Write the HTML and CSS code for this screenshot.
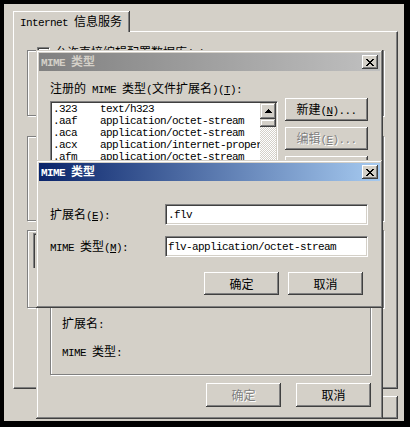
FILE: index.html
```html
<!DOCTYPE html>
<html>
<head>
<meta charset="utf-8">
<title>MIME 类型</title>
<link rel="stylesheet" href="styles.css">
</head>
<body>
<div class="desk">
  <div class="main">
    <div class="tab"><span>Internet <span class="c">信息服务</span></span></div>
    <div class="panel">
      <div class="group g1">
        <div class="legend"><span class="chk"></span><span><span class="c">允许直接编辑配置数据库</span>(<u>N</u>)</span></div>
      </div>
      <div class="group g2"></div>
      <div class="group g3"><div class="stub"></div></div>
    </div>
    <div class="main-btns">
      <div class="btn"><span class="c">确定</span></div>
      <div class="btn"><span class="c">取消</span></div>
      <div class="btn"><span><span class="c">应用</span>(<u>A</u>)</span></div>
    </div>
  </div>

  <div class="win dlg1">
    <div class="title inactive">
      <span class="ttext">MIME <span class="c">类型</span></span>
      <span class="close"><svg width="8" height="7" viewBox="0 0 8 7" shape-rendering="crispEdges"><path d="M0 0h2v1H0zM6 0h2v1H6zM1 1h2v1H1zM5 1h2v1H5zM2 2h4v1H2zM3 3h2v1H3zM2 4h4v1H2zM1 5h2v1H1zM5 5h2v1H5zM0 6h2v1H0zM6 6h2v1H6z" fill="#000"/></svg></span>
    </div>
    <div class="body1">
      <div class="lbl"><span class="c">注册的</span> MIME <span class="c">类型</span>(<span class="c">文件扩展名</span>)(<u>T</u>):</div>
      <div class="row">
        <div class="list">
          <div class="items">
            <div class="item"><span>.323</span><span>text/h323</span></div>
            <div class="item"><span>.aaf</span><span>application/octet-stream</span></div>
            <div class="item"><span>.aca</span><span>application/octet-stream</span></div>
            <div class="item"><span>.acx</span><span>application/internet-property-stream</span></div>
            <div class="item"><span>.afm</span><span>application/octet-stream</span></div>
            <div class="item"><span>.ai</span><span>application/postscript</span></div>
            <div class="item"><span>.aif</span><span>audio/x-aiff</span></div>
            <div class="item"><span>.aifc</span><span>audio/aiff</span></div>
            <div class="item"><span>.aiff</span><span>audio/aiff</span></div>
          </div>
          <div class="sbar">
            <div class="sbtn"><svg width="7" height="4" viewBox="0 0 7 4" shape-rendering="crispEdges"><path d="M3 0h1v1H3zM2 1h3v1H2zM1 2h5v1H1zM0 3h7v1H0z" fill="#000"/></svg></div>
            <div class="thumb"></div>
            <div class="track"></div>
          </div>
        </div>
        <div class="btncol">
          <div class="btn wide"><span><span class="c">新建</span>(<u>N</u>)...</span></div>
          <div class="btn wide dis"><span><span class="c">编辑</span>(<u>E</u>)...</span></div>
          <div class="btn wide"><span><span class="c">删除</span>(<u>R</u>)</span></div>
        </div>
      </div>
      <div class="group g4">
        <div class="gline"><span class="c">扩展名</span>:</div>
        <div class="gline second">MIME <span class="c">类型</span>:</div>
      </div>
      <div class="btnrow1">
        <div class="btn dis"><span class="c">确定</span></div>
        <div class="btn"><span class="c">取消</span></div>
      </div>
    </div>
  </div>

  <div class="win dlg2">
    <div class="title active">
      <span class="ttext">MIME <span class="c">类型</span></span>
      <span class="close"><svg width="8" height="7" viewBox="0 0 8 7" shape-rendering="crispEdges"><path d="M0 0h2v1H0zM6 0h2v1H6zM1 1h2v1H1zM5 1h2v1H5zM2 2h4v1H2zM3 3h2v1H3zM2 4h4v1H2zM1 5h2v1H1zM5 5h2v1H5zM0 6h2v1H0zM6 6h2v1H6z" fill="#000"/></svg></span>
    </div>
    <div class="body2">
      <div class="frow first">
        <div class="flbl"><span class="c">扩展名</span>(<u>E</u>):</div>
        <div class="field">.flv</div>
      </div>
      <div class="frow">
        <div class="flbl">MIME <span class="c">类型</span>(<u>M</u>):</div>
        <div class="field">flv-application/octet-stream</div>
      </div>
      <div class="btnrow2">
        <div class="btn"><span class="c">确定</span></div>
        <div class="btn"><span class="c">取消</span></div>
      </div>
    </div>
  </div>
</div>
</body>
</html>
```

FILE: styles.css
```css
* { box-sizing: border-box; margin: 0; padding: 0; }
body {
  margin: 0;
  background: #000;
  font-family: "Liberation Mono", "Noto Sans CJK SC", monospace;
  font-size: 11px;
  letter-spacing: -0.6px;
  line-height: 14px;
  color: #000;
}
.c {
  font-family: "Noto Sans CJK SC", sans-serif;
  font-size: 12px;
  letter-spacing: 0;
}
u { text-decoration: underline; text-underline-offset: 1px; }

.desk {
  position: relative;
  width: 410px;
  height: 427px;
  padding: 4px;
  background: #000;
  overflow: hidden;
}
.main {
  width: 400px;
  height: 417px;
  background: #d4d0c8;
  padding: 7px 0 0 9px;
}
.tab {
  position: relative;
  z-index: 1;
  width: 116px;
  height: 21px;
  margin-bottom: -1px;
  background: #d4d0c8;
  border-top: 1px solid #fff;
  border-left: 1px solid #fff;
  box-shadow: inset -1px 0 #808080, 1px 0 #404040;
  display: flex;
  align-items: center;
  padding-left: 6px;
  white-space: nowrap;
}
.panel {
  width: 385px;
  height: 358px;
  border-top: 1px solid #fff;
  border-left: 1px solid #fff;
  border-right: 1px solid #404040;
  border-bottom: 1px solid #404040;
  box-shadow: inset -1px -1px #808080;
  padding: 18px 0 0 13px;
}
.group {
  width: 357px;
  border: 1px solid #808080;
  box-shadow: inset 1px 1px #fff, 1px 1px #fff;
}
.g1 { height: 66px; }
.g2 { height: 85px; margin-top: 20px; }
.g3 { height: 78px; margin-top: 9px; padding: 2px 0 0 5px; }
.legend {
  display: flex;
  align-items: center;
  gap: 5px;
  width: max-content;
  margin: -6px 0 0 9px;
  padding-right: 2px;
  background: #d4d0c8;
  white-space: nowrap;
}
.chk {
  width: 13px;
  height: 13px;
  background: #fff;
  border-top: 1px solid #808080;
  border-left: 1px solid #808080;
  border-bottom: 1px solid #fff;
  border-right: 1px solid #fff;
  box-shadow: inset 1px 1px #404040, inset -1px -1px #d4d0c8;
}
.stub {
  width: 120px;
  height: 35px;
  border-top: 1px solid #808080;
  border-left: 1px solid #808080;
  box-shadow: inset 1px 1px #404040;
}
.main-btns {
  width: 385px;
  margin-top: 7px;
  display: flex;
  justify-content: flex-end;
  gap: 6px;
}

.btn {
  width: 75px;
  height: 23px;
  display: flex;
  align-items: center;
  justify-content: center;
  background: #d4d0c8;
  box-shadow: inset -1px -1px #404040, inset 1px 1px #fff, inset -2px -2px #808080, inset 2px 2px #d4d0c8;
  white-space: nowrap;
}
.btn.wide { width: 83px; }
.btn.dis { color: #808080; text-shadow: 1px 1px #fff; }

.win {
  position: absolute;
  background: #d4d0c8;
  padding: 3px;
  box-shadow: inset -1px -1px #404040, inset 1px 1px #d4d0c8, inset -2px -2px #808080, inset 2px 2px #fff;
}
.dlg1 { left: 36px; top: 50px; width: 347px; height: 369px; }
.dlg2 { left: 36px; top: 160px; width: 347px; height: 148px; }

.title {
  height: 18px;
  display: flex;
  align-items: center;
  justify-content: space-between;
  padding: 0 2px;
}
.title.inactive { background: linear-gradient(90deg, #808080, #c0c0c0); color: #d4d0c8; }
.title.active { background: linear-gradient(90deg, #0a246a, #a6caf0); color: #fff; }
.ttext { font-weight: bold; white-space: nowrap; }
.close {
  width: 16px;
  height: 14px;
  display: flex;
  align-items: center;
  justify-content: center;
  background: #d4d0c8;
  box-shadow: inset -1px -1px #404040, inset 1px 1px #fff, inset -2px -2px #808080, inset 2px 2px #d4d0c8;
}

.body1 { padding-left: 11px; }
.lbl { margin-top: 10px; height: 14px; white-space: nowrap; }
.row { display: flex; margin-top: 3px; }
.list {
  width: 228px;
  height: 119px;
  margin-top: 3px;
  display: flex;
  background: #fff;
  border-top: 1px solid #808080;
  border-left: 1px solid #808080;
  border-bottom: 1px solid #fff;
  border-right: 1px solid #fff;
  box-shadow: inset 1px 1px #404040, inset -1px -1px #d4d0c8;
  padding: 1px;
}
.items { flex: 1; overflow: hidden; padding-left: 1px; }
.item {
  display: grid;
  grid-template-columns: 47px 1fr;
  height: 12px;
  line-height: 12px;
  white-space: nowrap;
  overflow: hidden;
}
.sbar { width: 16px; display: flex; flex-direction: column; }
.sbtn, .thumb {
  background: #d4d0c8;
  box-shadow: inset -1px -1px #404040, inset 1px 1px #d4d0c8, inset -2px -2px #808080, inset 2px 2px #fff;
}
.sbtn { height: 16px; display: flex; align-items: center; justify-content: center; }
.thumb { height: 8px; }
.track {
  flex: 1;
  background: repeating-conic-gradient(#fff 0 25%, #d4d0c8 0 50%) 0 0 / 2px 2px;
}
.btncol { display: flex; flex-direction: column; gap: 6px; margin-left: 7px; }

.g4 { width: 321px; height: 125px; margin-top: 30px; padding: 65px 0 0 11px; }
.gline { height: 14px; white-space: nowrap; }
.gline.second { margin-top: 14px; }
.btnrow1 { display: flex; gap: 15px; margin-top: 8px; padding-left: 156px; }
.btnrow1 .btn { height: 24px; }

.body2 { padding-left: 11px; }
.frow { display: flex; align-items: center; height: 21px; margin-top: 11px; }
.frow.first { margin-top: 23px; }
.flbl { width: 115px; white-space: nowrap; }
.field {
  width: 203px;
  height: 21px;
  background: #fff;
  border-top: 1px solid #808080;
  border-left: 1px solid #808080;
  border-bottom: 1px solid #fff;
  border-right: 1px solid #fff;
  box-shadow: inset 1px 1px #404040, inset -1px -1px #d4d0c8;
  padding: 0 2px;
  display: flex;
  align-items: center;
  white-space: nowrap;
}
.btnrow2 { display: flex; gap: 9px; margin-top: 15px; padding-left: 154px; }
```
